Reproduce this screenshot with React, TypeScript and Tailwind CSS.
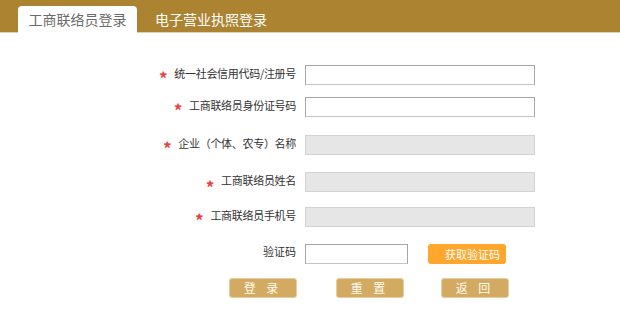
import React from "react";

const font = { fontFamily: '"Noto Sans CJK SC", "Noto Sans", sans-serif' };

function Star({ dy = 3 }: { dy?: number }) {
  return (
    <span
      className="mr-[7px] text-[17px] font-bold leading-none text-[#e8423f]"
      style={{ position: "relative", top: dy }}
    >
      *
    </span>
  );
}

function Row({
  label,
  star = true,
  gray = false,
  mt,
  starDy = 4,
}: {
  label: string;
  star?: boolean;
  gray?: boolean;
  mt: string;
  starDy?: number;
}) {
  return (
    <div className={`flex items-center ${mt}`}>
      <div className="flex w-[305px] items-center justify-end pr-[9px] text-[11px] leading-none tracking-[-0.3px] text-[#333] -translate-y-[2px]">
        {star && <Star dy={starDy} />}
        <span>{label}</span>
      </div>
      <div
        className={
          gray
            ? "h-[20px] w-[230px] border border-[#d2d2d2] bg-[#e6e6e6]"
            : "h-[20px] w-[230px] border border-[#a6a6a6] border-b-[#c4c4c4] bg-white"
        }
      />
    </div>
  );
}

export default function App() {
  return (
    <div className="h-[325px] w-[620px] overflow-hidden bg-white" style={font}>
      <div className="flex h-[32px] items-end bg-[#ab8331]">
        <div className="ml-[18px] flex h-[26px] w-[119px] items-center justify-center rounded-t-[4px] bg-white text-[14px] text-[#6b6b6b]">
          工商联络员登录
        </div>
        <div className="ml-[18px] flex h-[26px] items-center text-[14px] text-white">
          电子营业执照登录
        </div>
      </div>
      <div className="flex h-[1px]">
        <div className="w-[18px] bg-[#d9d3b3]" />
        <div className="w-[119px] bg-white" />
        <div className="flex-1 bg-[#d9d3b3]" />
      </div>

      <Row label="统一社会信用代码/注册号" mt="mt-[32px]" />
      <Row label="工商联络员身份证号码" mt="mt-[12px]" />
      <Row label="企业（个体、农专）名称" gray mt="mt-[18px]" />
      <Row label="工商联络员姓名" gray mt="mt-[17px]" starDy={6} />
      <Row label="工商联络员手机号" gray mt="mt-[15px]" />

      <div className="mt-[17px] flex items-center">
        <div className="w-[305px] pr-[9px] text-right text-[11px] leading-none text-[#333] -translate-y-[3px]">
          验证码
        </div>
        <div className="h-[20px] w-[103px] border border-[#a6a6a6] border-b-[#c4c4c4] bg-white" />
        <button className="ml-[20px] flex h-[20px] w-[78px] items-center rounded-[3px] bg-[#ffa62c] pl-[17px] text-[11px] leading-none text-white">
          获取验证码
        </button>
      </div>

      <div className="mt-[14px] flex items-center">
        <button className="ml-[229px] flex h-[20px] w-[68px] items-center justify-center rounded-[3px] border border-[#e4cf9f] bg-[#d2aa62] text-[12px] leading-none tracking-[4px] text-[#fffaf0]">
          登 录
        </button>
        <button className="ml-[39px] flex h-[20px] w-[68px] items-center justify-center rounded-[3px] border border-[#e4cf9f] bg-[#d2aa62] text-[12px] leading-none tracking-[4px] text-[#fffaf0]">
          重 置
        </button>
        <button className="ml-[37px] flex h-[20px] w-[68px] items-center justify-center rounded-[3px] border border-[#e4cf9f] bg-[#d2aa62] text-[12px] leading-none tracking-[4px] text-[#fffaf0]">
          返 回
        </button>
      </div>
    </div>
  );
}
